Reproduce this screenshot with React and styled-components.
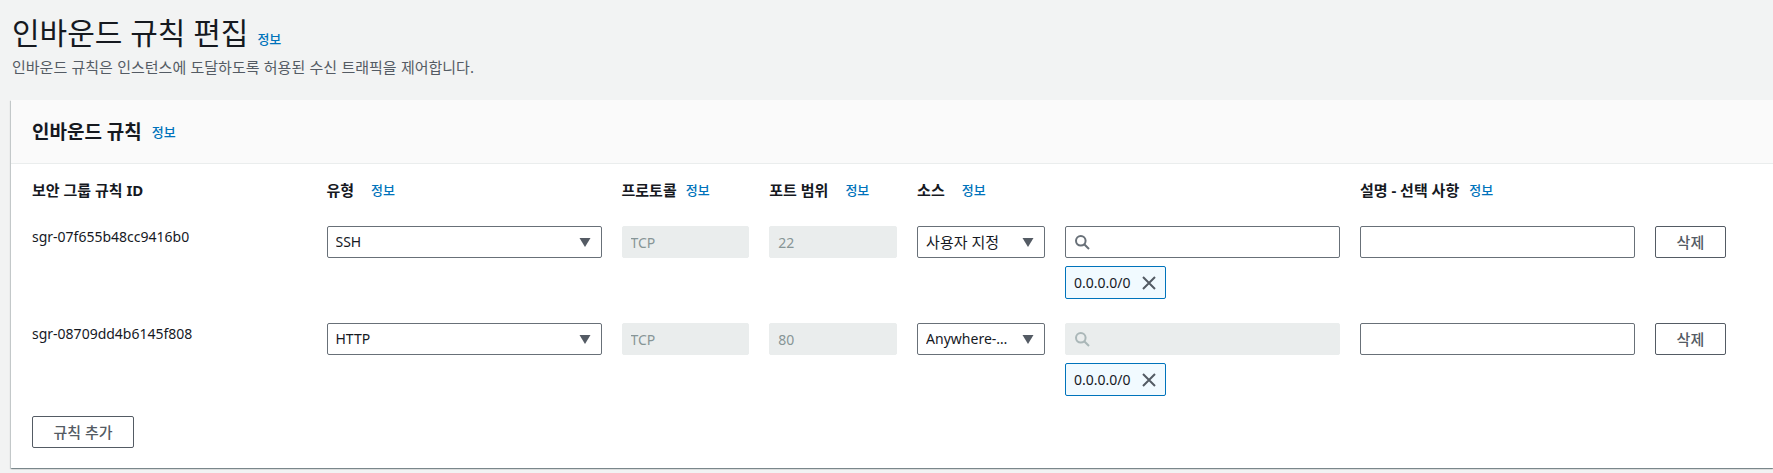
import React from "react";
import styled, { createGlobalStyle } from "styled-components";

const Global = createGlobalStyle`
  html, body { margin: 0; padding: 0; background: #f2f3f3; overflow: hidden; }
  body { font-family: "Noto Sans", "Noto Sans CJK KR", sans-serif; color: #16191f; font-size: 14px; line-height: 22px; }
  * { box-sizing: border-box; }
`;

const Page = styled.div`
  width: 1773px;
  height: 473px;
  padding: 12px 0 0 11px;
`;
const PageHeader = styled.header`
  padding: 0 0 0 1px;
  height: 88px;
`;
const TitleRow = styled.div`
  display: flex;
  align-items: baseline;
  gap: 9px;
`;
const Title = styled.h1`
  margin: 0;
  font-size: 30px;
  line-height: 42px;
  font-weight: 400;
`;
const Description = styled.p`
  margin: 2px 0 0;
  color: #545b64;
  font-size: 15px;
  line-height: 22px;
  word-spacing: 0.4px;
`;
const Info = styled.a`
  color: #0073bb;
  font-size: 13px;
  line-height: 18px;
  font-weight: 500;
  margin-left: ${(p) => p.$gap ?? 0}px;
`;
const Card = styled.section`
  background: #fff;
  height: 368px;
  box-shadow: 0 1px 1px 0 rgba(0, 28, 36, 0.3), 1px 1px 1px 0 rgba(0, 28, 36, 0.15), -1px 1px 1px 0 rgba(0, 28, 36, 0.15);
`;
const CardHeader = styled.div`
  height: 64px;
  padding: 0 21px;
  display: flex;
  align-items: center;
  background: #fafafa;
  border-bottom: 1px solid #eaeded;
`;
const CardTitle = styled.h2`
  margin: 0;
  font-size: 19px;
  line-height: 22px;
  font-weight: 700;
`;
const CardBody = styled.div`
  padding: 15px 46px 20px 21px;
`;
const Grid = styled.div`
  display: grid;
  grid-template-columns: 274.5px 275px 127.8px 127.8px 127.8px 275px 275px 71px;
  column-gap: 20px;
`;
const LabelRow = styled(Grid)`
  height: 47px;
`;
const Label = styled.div`
  display: flex;
  align-items: center;
  height: 22px;
  font-size: 15px;
  font-weight: 700;
  white-space: nowrap;
`;
const RuleRow = styled(Grid)`
  margin-bottom: ${(p) => (p.$last ? 20 : 24)}px;
`;
const RuleId = styled.div``;
const Select = styled.div`
  height: 32px;
  display: flex;
  align-items: center;
  gap: 8px;
  padding: 0 8px;
  background: #fff;
  border: 1px solid #687078;
  border-radius: 2px;
`;
const SelectValue = styled.span`
  flex: 1;
  min-width: 0;
  overflow: hidden;
  white-space: nowrap;
  text-overflow: ellipsis;
  font-size: ${(p) => (p.$hangul ? 15 : 14)}px;
`;
const ReadOnly = styled.input`
  width: 100%;
  height: 32px;
  padding: 0 8px;
  background: #eaeded;
  border: 1px solid #eaeded;
  border-radius: 2px;
  color: #879596;
  font: inherit;
`;
const TextInput = styled.input`
  width: 100%;
  height: 32px;
  background: #fff;
  border: 1px solid #687078;
  border-radius: 2px;
  font: inherit;
`;
const SourceCell = styled.div`
  display: flex;
  flex-direction: column;
  align-items: flex-start;
  gap: 8px;
`;
const SearchBox = styled.div`
  width: 100%;
  height: 32px;
  display: flex;
  align-items: center;
  padding: 0 8px;
  color: ${(p) => (p.$disabled ? "#aab7b8" : "#687078")};
  background: ${(p) => (p.$disabled ? "#eaeded" : "#fff")};
  border: 1px solid ${(p) => (p.$disabled ? "#eaeded" : "#687078")};
  border-radius: 2px;
`;
const Chip = styled.div`
  width: 101px;
  height: 33px;
  display: flex;
  align-items: center;
  justify-content: space-between;
  padding: 0 8px;
  background: #f1faff;
  border: 1px solid #0073bb;
  border-radius: 2px;
  white-space: nowrap;
`;
const ChipClose = styled.span`
  display: flex;
  flex: none;
  color: #545b64;
`;
const Button = styled.button`
  height: 32px;
  width: ${(p) => p.$width}px;
  padding: 0;
  background: #fff;
  border: 1px solid #545b64;
  border-radius: 2px;
  color: #545b64;
  font: inherit;
  font-size: 15px;
  font-weight: 500;
`;

const Caret = () => (
  <svg width="16" height="16" viewBox="0 0 16 16" style={{ flex: "none" }}>
    <path d="M2.5 4h11L8 13z" fill="#545b64" />
  </svg>
);
const SearchIcon = () => (
  <svg width="16" height="16" viewBox="0 0 16 16" fill="none" stroke="currentColor" strokeWidth="2">
    <circle cx="6.8" cy="6.8" r="4.8" />
    <path d="M10.2 10.2L15 15" />
  </svg>
);
const CloseIcon = () => (
  <svg width="16" height="16" viewBox="0 0 16 16" fill="none" stroke="currentColor" strokeWidth="2">
    <path d="M2 2l12 12M14 2L2 14" />
  </svg>
);

const columns = [
  { label: "보안 그룹 규칙 ID" },
  { label: "유형", gap: 17 },
  { label: "프로토콜", gap: 9 },
  { label: "포트 범위", gap: 17 },
  { label: "소스", gap: 17 },
  { label: "" },
  { label: "설명 - 선택 사항", gap: 10 },
  { label: "" },
];

const rules = [
  { id: "sgr-07f655b48cc9416b0", type: "SSH", port: "22", source: "사용자 지정", hangul: true, locked: false },
  { id: "sgr-08709dd4b6145f808", type: "HTTP", port: "80", source: "Anywhere-IPv4", hangul: false, locked: true },
];

export default function App() {
  return (
    <Page>
      <Global />
      <PageHeader>
        <TitleRow>
          <Title>인바운드 규칙 편집</Title>
          <Info>정보</Info>
        </TitleRow>
        <Description>인바운드 규칙은 인스턴스에 도달하도록 허용된 수신 트래픽을 제어합니다.</Description>
      </PageHeader>
      <Card>
        <CardHeader>
          <CardTitle>인바운드 규칙</CardTitle>
          <Info $gap={10}>정보</Info>
        </CardHeader>
        <CardBody>
          <LabelRow>
            {columns.map((c, i) => (
              <Label key={i}>
                {c.label}
                {c.gap !== undefined && <Info $gap={c.gap}>정보</Info>}
              </Label>
            ))}
          </LabelRow>
          {rules.map((r, i) => (
            <RuleRow key={r.id} $last={i === rules.length - 1}>
              <RuleId>{r.id}</RuleId>
              <Select>
                <SelectValue>{r.type}</SelectValue>
                <Caret />
              </Select>
              <ReadOnly disabled value="TCP" />
              <ReadOnly disabled value={r.port} />
              <Select>
                <SelectValue $hangul={r.hangul}>{r.source}</SelectValue>
                <Caret />
              </Select>
              <SourceCell>
                <SearchBox $disabled={r.locked}>
                  <SearchIcon />
                </SearchBox>
                <Chip>
                  0.0.0.0/0
                  <ChipClose>
                    <CloseIcon />
                  </ChipClose>
                </Chip>
              </SourceCell>
              <TextInput />
              <Button $width={71}>삭제</Button>
            </RuleRow>
          ))}
          <Button $width={102}>규칙 추가</Button>
        </CardBody>
      </Card>
    </Page>
  );
}
